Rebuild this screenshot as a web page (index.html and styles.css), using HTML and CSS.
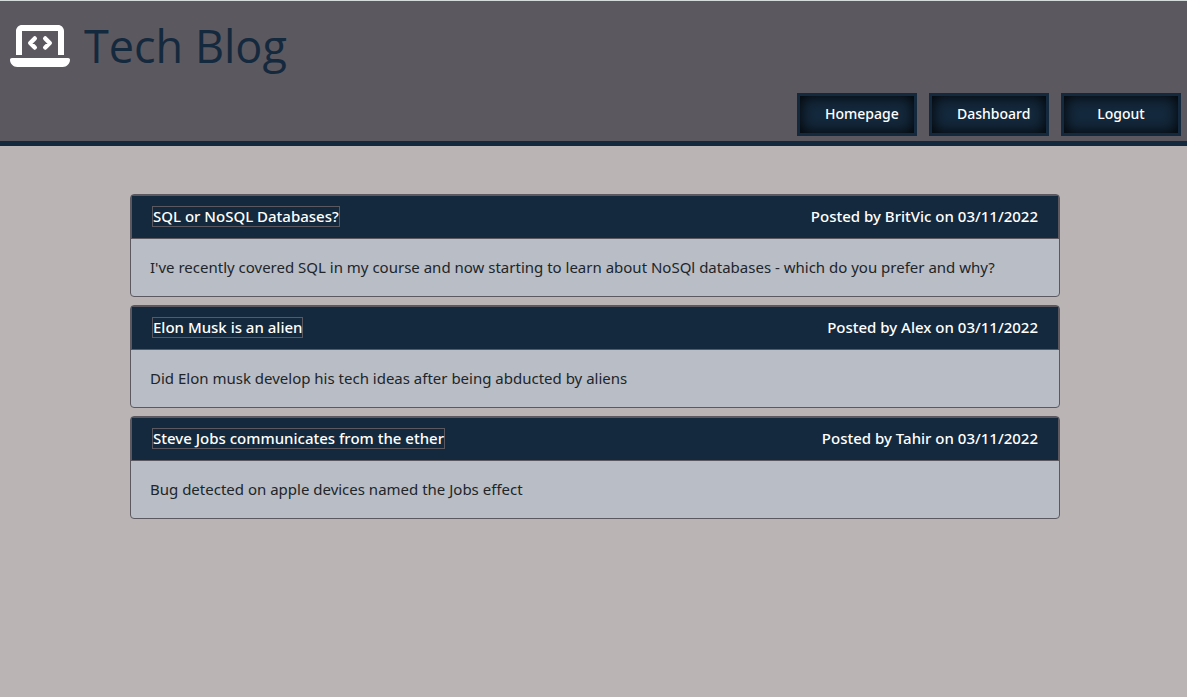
FILE: index.html
```html
<!DOCTYPE html>
<html lang="en">
<head>
<meta charset="utf-8">
<meta name="viewport" content="width=device-width, initial-scale=1">
<title>Tech Blog</title>
<link rel="stylesheet" href="styles.css">
</head>
<body>
<header class="site-header">
  <div class="brand">
    <svg class="brand-icon" viewBox="0 0 640 512" aria-hidden="true">
      <path fill="currentColor" d="M64 96c0-35.300 28.700-64 64-64H512c35.300 0 64 28.700 64 64V352H512V96H128V352H64V96zM0 403.200C0 392.600 8.600 384 19.200 384H620.800c10.600 0 19.200 8.600 19.200 19.200c0 42.400-34.400 76.800-76.800 76.800H76.800C34.400 480 0 445.600 0 403.200z"/>
      <path fill="none" stroke="currentColor" stroke-width="48" stroke-linecap="round" stroke-linejoin="round" d="M264 176L216 224L264 272M376 176L424 224L376 272"/>
    </svg>
    <h1 class="brand-name">Tech Blog</h1>
  </div>
  <nav class="site-nav">
    <a class="nav-link" href="#">Homepage</a>
    <a class="nav-link" href="#">Dashboard</a>
    <a class="nav-link" href="#">Logout</a>
  </nav>
</header>
<main class="posts">
  <article class="post">
    <div class="post-header">
      <a class="post-title" href="#">SQL or NoSQL Databases?</a>
      <span class="post-meta">Posted by BritVic on 03/11/2022</span>
    </div>
    <p class="post-body">I've recently covered SQL in my course and now starting to learn about NoSQl databases - which do you prefer and why?</p>
  </article>
  <article class="post">
    <div class="post-header">
      <a class="post-title" href="#">Elon Musk is an alien</a>
      <span class="post-meta">Posted by Alex on 03/11/2022</span>
    </div>
    <p class="post-body">Did Elon musk develop his tech ideas after being abducted by aliens</p>
  </article>
  <article class="post">
    <div class="post-header">
      <a class="post-title" href="#">Steve Jobs communicates from the ether</a>
      <span class="post-meta">Posted by Tahir on 03/11/2022</span>
    </div>
    <p class="post-body">Bug detected on apple devices named the Jobs effect</p>
  </article>
</main>
</body>
</html>
```
FILE: styles.css
```css
* {
  box-sizing: border-box;
}

body {
  margin: 0;
  background: #bab5b4;
  color: #212529;
  font-family: "Trebuchet MS", "Noto Sans", sans-serif;
  font-size: 15px;
  line-height: 24px;
}

.site-header {
  background: #5c585f;
  border-top: 1px solid #d5dadb;
  border-bottom: 5px solid #14293d;
}

.brand {
  display: flex;
  align-items: center;
  gap: 14px;
  padding: 15px 10px 0;
}

.brand-icon {
  width: 60px;
  height: 48px;
  color: #fff;
}

.brand-name {
  margin: 0;
  color: #14293d;
  font-family: "Trebuchet MS", "Open Sans", sans-serif;
  font-size: 45px;
  font-weight: 400;
  line-height: 60px;
}

.site-nav {
  display: flex;
  justify-content: flex-end;
  gap: 12px;
  padding: 17px 6px 5px;
}

.nav-link {
  width: 120px;
  padding: 6px 25px 7px;
  border: 3px solid #14293d;
  background: #14293d;
  box-shadow: inset 0 0 15px #000;
  color: #fff;
  font-size: 14px;
  font-weight: 500;
  text-align: center;
  text-decoration: none;
  white-space: nowrap;
}

.posts {
  display: flex;
  flex-direction: column;
  gap: 8px;
  padding: 48px 127px 48px 130px;
}

.post {
  overflow: hidden;
  border: 1px solid #5c585f;
  border-radius: 4px;
  background: #b8bdc6;
}

.post-header {
  display: flex;
  justify-content: space-between;
  align-items: center;
  padding: 8px 20px 10px;
  border: 1px solid #5c585f;
  background: #14293d;
  color: #fff;
  font-weight: 500;
}

.post-title {
  border: 1px solid #5c585f;
  color: #fff;
  line-height: 19px;
  text-decoration: none;
}

.post-body {
  margin: 0;
  padding: 16px 19px 17px;
}
```
